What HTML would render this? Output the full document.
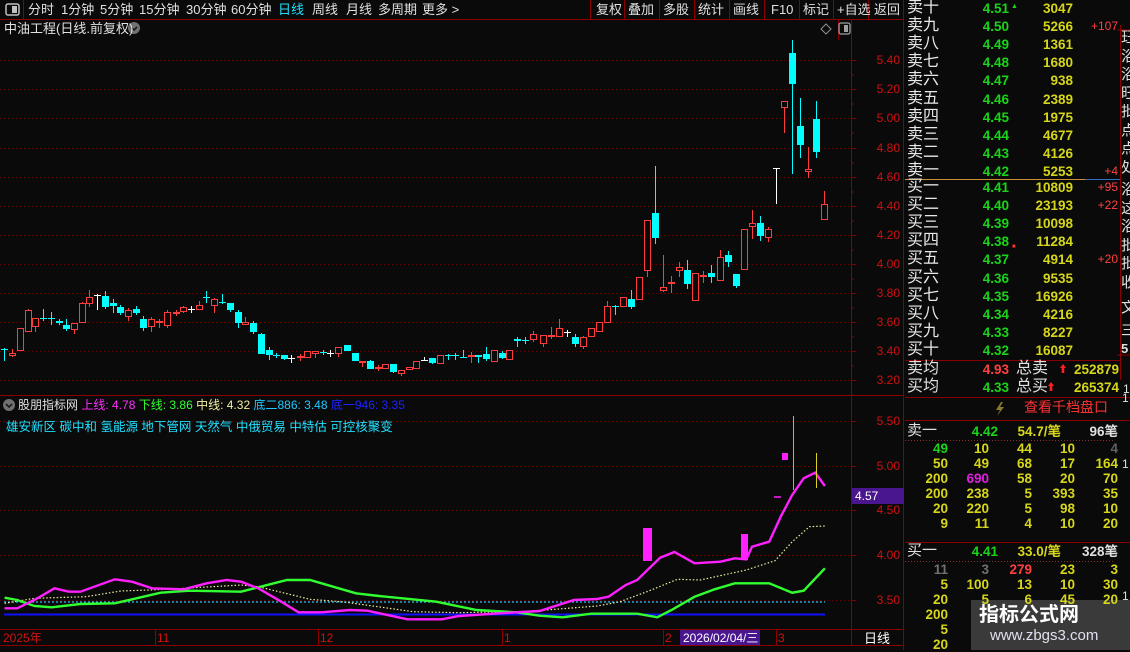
<!DOCTYPE html>
<html><head><meta charset="utf-8"><style>
*{margin:0;padding:0;box-sizing:border-box}
body{width:1130px;height:650px;background:#0a0a0a;overflow:hidden;position:relative;font-family:"Liberation Sans","Noto Sans CJK SC",sans-serif;font-size:13px;color:#e0e0e0}
.a{position:absolute;white-space:nowrap;line-height:1}
.g{color:#19d419;font-weight:bold}
.y{color:#d6d61a;font-weight:bold}
.r{color:#ff4040}
.w{color:#e8e8e8}
</style></head><body>
<svg width="1130" height="650" style="position:absolute;left:0;top:0" id="s"></svg>
<div id="t"></div>
<script>
var S=document.getElementById('s'),T=document.getElementById('t');
var h='';
function L(x1,y1,x2,y2,c,w,d){h+='<line x1="'+x1+'" y1="'+y1+'" x2="'+x2+'" y2="'+y2+'" stroke="'+c+'" stroke-width="'+(w||1)+'"'+(d?' stroke-dasharray="'+d+'"':'')+'/>';}
function R(x,y,w,hh,f,st){h+='<rect x="'+x+'" y="'+y+'" width="'+w+'" height="'+hh+'" fill="'+f+'"'+(st?' stroke="'+st+'"':'')+'/>';}
// frame lines
L(0,19.5,903,19.5,'#8a0000');L(0,395.5,903,395.5,'#8a0000');L(0,629.5,903,629.5,'#8a0000');L(0,645.5,903,645.5,'#8a0000');
L(851.5,20,851.5,645,'#8a0000');L(903.5,0,903.5,650,'#8a0000');L(23.5,0,23.5,19,'#8a0000');
[590,624,659,694,729,764,799,833,868].forEach(function(x){L(x+.5,0,x+.5,19,'#8a0000')});
L(838.5,20,838.5,40,'#8a0000');
// price grid
var pr=[['5.40',60],['5.20',89],['5.00',118],['4.80',148],['4.60',177],['4.40',206],['4.20',235],['4.00',264],['3.80',293],['3.60',322],['3.40',351],['3.20',380]];
pr.forEach(function(p){L(0,p[1]+.5,851,p[1]+.5,'#6a0000',1,'1 3');L(851,p[1]+.5,856,p[1]+.5,'#8a0000');L(851,p[1]+15,854,p[1]+15,'#8a0000')});
var ir=[['5.50',421],['5.00',466],['4.50',510],['4.00',555],['3.50',600]];
ir.forEach(function(p){L(0,p[1]+.5,851,p[1]+.5,'#6a0000',1,'1 3');L(851,p[1]+.5,856,p[1]+.5,'#8a0000')});
// candles [x,top,bot,wt,wb,c] c: r red hollow, c cyan, w white doji
var C=[[4,349,350,348,361,'c'],[12,353,356,349,357,'r'],[20,328,351,328,351,'r'],[28,310,332,309,332,'r'],[35,318,327,318,332,'r'],[43,318,319,309,321,'c'],[51,318,319,312,325,'c'],[59,321,323,319,325,'c'],[66,325,329,319,331,'c'],[74,323,330,323,334,'r'],[82,303,323,302,323,'r'],[89,297,304,290,307,'r'],[97,295,296,294,310,'w'],[105,296,307,291,309,'c'],[113,303,306,299,313,'c'],[120,307,313,305,315,'c'],[128,310,317,308,321,'r'],[136,309,313,306,315,'c'],[143,319,328,316,331,'c'],[151,319,327,317,332,'r'],[159,321,323,319,328,'r'],[167,312,326,310,328,'r'],[176,312,314,310,316,'r'],[183,307,312,306,313,'r'],[191,309,310,306,313,'w'],[199,305,310,301,310,'r'],[206,297,298,291,303,'c'],[214,299,306,298,313,'r'],[222,302,303,294,304,'c'],[230,303,310,303,312,'c'],[238,312,323,310,328,'c'],[245,322,325,317,325,'r'],[253,323,332,321,334,'c'],[261,334,354,333,354,'c'],[269,350,355,347,360,'c'],[276,355,356,353,358,'c'],[284,355,359,355,360,'c'],[291,358,359,355,363,'w'],[300,356,358,354,361,'r'],[307,351,358,351,358,'r'],[315,351,354,351,358,'r'],[323,352,353,350,355,'c'],[330,353,354,350,357,'w'],[338,347,354,347,357,'r'],[347,345,351,345,351,'c'],[355,353,361,353,361,'c'],[362,361,363,361,367,'r'],[370,361,369,360,369,'c'],[378,367,369,365,371,'r'],[385,364,369,364,369,'r'],[393,364,372,364,373,'c'],[401,370,374,370,376,'r'],[409,367,370,367,370,'r'],[416,361,369,361,369,'r'],[424,360,361,357,361,'w'],[432,358,363,358,364,'c'],[440,355,364,355,364,'r'],[448,355,356,354,360,'c'],[455,355,356,353,360,'c'],[463,357,358,350,358,'c'],[471,355,357,352,363,'r'],[478,355,357,355,363,'c'],[486,354,359,347,361,'c'],[494,350,362,350,362,'r'],[502,353,358,351,359,'c'],[509,350,360,350,360,'r'],[517,339,341,337,347,'c'],[525,340,341,337,344,'c'],[533,334,340,331,342,'r'],[543,335,344,335,347,'r'],[551,335,337,327,339,'r'],[559,328,337,319,337,'r'],[567,332,333,330,337,'w'],[575,337,344,334,347,'c'],[583,337,347,336,349,'r'],[591,328,337,328,337,'r'],[599,322,332,322,332,'r'],[607,306,323,301,323,'r'],[615,306,307,305,315,'c'],[623,297,307,297,307,'r'],[631,299,307,290,309,'c'],[639,277,300,277,300,'r'],[647,220,271,220,277,'r'],[655,213,238,166,244,'c'],[663,287,291,255,292,'r'],[671,282,284,276,293,'r'],[679,267,271,262,277,'r'],[687,270,284,260,289,'c'],[695,273,301,273,301,'r'],[703,275,277,271,283,'r'],[711,273,277,265,283,'c'],[720,257,281,250,281,'r'],[728,255,262,251,267,'c'],[736,274,286,274,288,'c'],[744,229,270,229,270,'r'],[752,223,227,210,239,'r'],[760,223,236,216,241,'c'],[768,229,238,227,242,'r'],[776,168,169,168,204,'w'],[784,101,108,101,133,'r'],[792,53,84,40,174,'c'],[800,126,145,98,158,'c'],[808,169,172,147,178,'r'],[816,119,152,101,158,'c'],[824,204,220,191,220,'r']];
C.forEach(function(k){var x=k[0],col=k[5]=='r'?'#ff3c3c':k[5]=='c'?'#00ffff':'#ffffff';
L(x+.5,k[3],x+.5,k[4],col);
if(k[5]=='w'){L(x-3,k[1]+.5,x+4,k[1]+.5,col);}
else if(k[5]=='c'){R(x-3,k[1],7,Math.max(1,k[2]-k[1]),col);}
else{h+='<rect x="'+(x-2.5)+'" y="'+(k[1]+.5)+'" width="6" height="'+Math.max(1,k[2]-k[1]-1)+'" fill="#0a0a0a" stroke="'+col+'"/>';}
});
// indicator
function P(pts,c,w,d){var s=pts.map(function(p){return (p[0]/1.742).toFixed(1)+','+(400+p[1]/3).toFixed(1)}).join(' ');h+='<polyline points="'+s+'" fill="none" stroke="'+c+'" stroke-width="'+w+'"'+(d?' stroke-dasharray="'+d+'"':'')+'/>';}
L(4,602,825,602,'#20c8ff',1.3,'2 2');
L(4,614.5,825,614.5,'#1010ff',2);
P([[8,610],[60,595],[150,590],[210,573],[260,570],[300,567],[420,555],[450,560],[490,577],[540,598],[600,606],[720,635],[800,638],[920,634],[980,626],[1040,618],[1080,605],[1130,573],[1180,538],[1220,540],[1300,510],[1350,482],[1380,425],[1410,380],[1437,378]],'#f0f0a0',1.2,'1.5 2');
P([[8,593],[30,600],[60,618],[90,622],[140,612],[200,610],[280,578],[330,572],[420,575],[500,540],[540,540],[620,580],[660,588],[760,605],[830,630],[900,637],[940,647],[980,652],[1030,641],[1110,641],[1145,652],[1170,630],[1210,590],[1245,568],[1280,550],[1340,550],[1380,578],[1400,572],[1437,505]],'#30ff30',2.4);
P([[8,625],[30,625],[60,600],[95,565],[120,575],[140,575],[200,538],[230,545],[265,565],[320,568],[360,550],[395,540],[420,545],[450,565],[490,605],[520,637],[560,637],[610,630],[640,632],[710,658],[770,658],[800,648],[870,640],[940,633],[1000,600],[1040,597],[1060,590],[1090,555],[1110,540],[1150,473],[1175,456],[1210,490],[1255,485],[1280,475],[1300,478],[1310,440],[1340,425],[1360,350],[1380,285],[1400,235],[1420,218],[1437,258]],'#ff20ff',2.4);
R(643,528,9,33,'#ff20ff');R(741,534,7,26,'#ff20ff');R(782,453,6,7,'#ff20ff');L(774,497,781,497,'#ff20ff',1.5);
L(793.5,416,793.5,490,'#30ff30');L(816.5,453,816.5,488,'#e0d020');
R(852,488,52,16,'#4a1690');
// date axis
R(680,630,80,15,'#4a1690');
[155,318,502,663,776].forEach(function(x){L(x+.5,630,x+.5,645,'#8a0000')});
// right panel lines
L(905,179.5,1115,179.5,'#c89030');L(1085,179.5,1120,179.5,'#3070c0');
L(905,360.5,1120,360.5,'#8a0000');L(905,397.5,1130,397.5,'#8a0000');L(905,420.5,1130,420.5,'#8a0000');L(905,542.5,1130,542.5,'#8a0000');
L(905,440.5,1115,440.5,'#8a3030',1,'1 2');L(905,561.5,1115,561.5,'#8a3030',1,'1 2');
L(1120.5,25,1120.5,380,'#8a0000');L(1117,30,1130,30,'#8a0000');L(1117,355,1130,355,'#8a0000');
R(971,600,159,50,'#3a3a3a');
// icons
h+='<rect x="6" y="4" width="13" height="11" rx="2" fill="none" stroke="#c0c0c0" stroke-width="1.5"/><rect x="12" y="6" width="5" height="7" fill="#c0c0c0"/>';
h+='<rect x="839" y="23" width="11" height="11" rx="2" fill="none" stroke="#a0a0a0" stroke-width="1.3"/><rect x="844" y="25" width="4" height="7" fill="#a0a0a0"/>';
h+='<path d="M826 24 L831 29 L826 34 L821 29Z" fill="none" stroke="#909090"/>';
h+='<circle cx="134" cy="28" r="6" fill="#707070"/><path d="M131 27 L134 30 L137 27" fill="none" stroke="#111" stroke-width="1.5"/>';
h+='<circle cx="9" cy="405" r="6" fill="#707070"/><path d="M6 404 L9 407 L12 404" fill="none" stroke="#111" stroke-width="1.5"/>';
h+='<path d="M1001 402 L996 410 L1000 410 L997 416 L1004 407 L1000 407 L1003 402Z" fill="#8a7a30"/>';
h+='<path d="M1063 364 L1066 368 L1064.3 368 L1064.3 373 L1061.7 373 L1061.7 368 L1060 368Z" fill="#ff2020"/><path d="M1051 382 L1054 386 L1052.3 386 L1052.3 391 L1049.7 391 L1049.7 386 L1048 386Z" fill="#ff2020"/>';
S.innerHTML=h;
var t='';
function X(x,y,s,st){t+='<div class="a" style="left:'+x+'px;top:'+y+'px;'+(st||'')+'">'+s+'</div>';}
function XR(r,y,s,st){t+='<div class="a" style="right:'+(1130-r)+'px;top:'+y+'px;'+(st||'')+'">'+s+'</div>';}
var tb=[[28,'分时'],[61,'1分钟'],[100,'5分钟'],[139,'15分钟'],[186,'30分钟'],[231,'60分钟'],[278,'日线','color:#20e0ff'],[312,'周线'],[346,'月线'],[378,'多周期'],[422,'更多 &gt;']];
tb.forEach(function(b){X(b[0],3,b[1],b[2]||'')});
[[596,'复权'],[628,'叠加'],[663,'多股'],[698,'统计'],[733,'画线'],[771,'F10'],[803,'标记'],[837,'+自选'],[874,'返回']].forEach(function(b){X(b[0],3,b[1])});
X(4,22,'中油工程(日线.前复权)');
pr.forEach(function(p){XR(900,p[1]-6,p[0],'color:#d01010;font-size:12px')});
ir.forEach(function(p){XR(900,p[1]-6,p[0],'color:#d01010;font-size:12px')});
X(855,490,'4.57','color:#fff;font-size:12px');
X(18,399,'股朋指标网 <span style="color:#ff30ff">上线: 4.78</span> <span style="color:#30ff30">下线: 3.86</span> <span style="color:#f0f0a0">中线: 4.32</span> <span style="color:#20c8ff">底二886: 3.48</span> <span style="color:#2020ff">底一946: 3.35</span>','font-size:12px');
X(6,421,'雄安新区 碳中和 氢能源 地下管网 天然气 中俄贸易 中特估 可控核聚变','color:#20e0ff;font-size:12.5px');
X(3,632,'2025年','color:#d01010;font-size:12px');X(157,632,'11','color:#d01010;font-size:12px');X(320,632,'12','color:#d01010;font-size:12px');X(504,632,'1','color:#d01010;font-size:12px');X(665,632,'2','color:#d01010;font-size:12px');X(683,632,'2026/02/04/三','color:#fff;font-size:12px');X(778,632,'3','color:#d01010;font-size:12px');X(864,632,'日线','color:#fff');
// order book
var sell=[['卖十','4.51','3047',''],['卖九','4.50','5266','+107'],['卖八','4.49','1361',''],['卖七','4.48','1680',''],['卖六','4.47','938',''],['卖五','4.46','2389',''],['卖四','4.45','1975',''],['卖三','4.44','4677',''],['卖二','4.43','4126',''],['卖一','4.42','5253','+4'],
['买一','4.41','10809','+95'],['买二','4.40','23193','+22'],['买三','4.39','10098',''],['买四','4.38','11284',''],['买五','4.37','4914','+20'],['买六','4.36','9535',''],['买七','4.35','16926',''],['买八','4.34','4216',''],['买九','4.33','8227',''],['买十','4.32','16087','']];
sell.forEach(function(r,i){var y=(i<10?0+i*18.1:188+(i-10)*18.1-9);X(907,y,r[0],'font-size:16px;color:#e8e8e8');XR(1009,y+2,r[1],'font-size:13.5px;color:#19d419;font-weight:bold');XR(1073,y+2,r[2],'font-size:13.5px;color:#d6d61a;font-weight:bold');if(r[3])XR(1118,y+2,r[3],'font-size:12px;color:#ff4040');});
X(1011,3,'▲','font-size:7px;color:#19d419');X(1012,244,'■','font-size:6px;color:#ff3030');
X(907,361,'卖均','font-size:16px');XR(1009,363,'4.93','font-size:13.5px;color:#ff4040;font-weight:bold');X(1016,361,'总卖','font-size:16px');XR(1119,363,'252879','font-size:13.5px;color:#d6d61a;font-weight:bold');
X(907,379,'买均','font-size:16px');XR(1009,381,'4.33','font-size:13.5px;color:#19d419;font-weight:bold');X(1016,379,'总买','font-size:16px');XR(1119,381,'265374','font-size:13.5px;color:#d6d61a;font-weight:bold');
X(1024,400,'查看千档盘口','font-size:14px;color:#ff3030');
X(907,423,'卖一','font-size:15px');XR(998,425,'4.42','font-size:13.5px;color:#19d419;font-weight:bold');XR(1061,425,'54.7/笔','font-size:13.5px;color:#d6d61a;font-weight:bold');XR(1118,425,'96笔','font-size:13.5px;font-weight:bold');
X(907,543,'买一','font-size:15px');XR(998,545,'4.41','font-size:13.5px;color:#19d419;font-weight:bold');XR(1061,545,'33.0/笔','font-size:13.5px;color:#d6d61a;font-weight:bold');XR(1118,545,'328笔','font-size:13.5px;font-weight:bold');
var cols=[948,989,1032,1075,1118];
var g1=[['49','10','44','10','4'],['50','49','68','17','164'],['200','690','58','20','70'],['200','238','5','393','35'],['20','220','5','98','10'],['9','11','4','10','20']];
var g2=[['11','3','279','23','3'],['5','100','13','10','30'],['20','5','6','45','20'],['200','','','',''],['5','','','',''],['20','','','','']];
function grid(g,y0,sp){g.forEach(function(r,i){r.forEach(function(v,j){if(!v)return;var c='#d6d61a';if(y0<500&&i==0&&j==0)c='#19d419';if(y0<500&&i==0&&j==4)c='#606060';if(y0<500&&i==2&&j==1)c='#e020e0';if(y0>500&&i==0&&j<2)c='#707070';if(y0>500&&i==0&&j==2)c='#ff4040';XR(cols[j],y0+i*sp,v,'font-size:13.5px;font-weight:bold;color:'+c)})})}
grid(g1,442,15);grid(g2,563,15);
X(979,605,'指标公式网','font-size:20px;font-weight:bold;color:#fff');X(990,628,'www.zbgs3.com','font-size:15px;color:#e0e0f0');
['玨','浴','浴','旺','批','点','点','处'].forEach(function(c,i){X(1121,30+i*18.5,c,'font-size:15px;width:9px;overflow:hidden')});
['浴','这','浴','批','批','收'].forEach(function(c,i){X(1121,182+i*18.5,c,'font-size:15px;width:9px;overflow:hidden')});
X(1121,300,'文','font-size:15px;width:9px;overflow:hidden');X(1121,323,'三','font-size:14px;width:9px;overflow:hidden');X(1121,342,'5','font-size:13px;font-weight:bold');X(1123,383,'1','font-size:12px');
X(1122,392,'1','font-size:12px');X(1122,458,'1','font-size:12px');X(1122,590,'1','font-size:12px');
T.innerHTML=t;
</script>
</body></html>
